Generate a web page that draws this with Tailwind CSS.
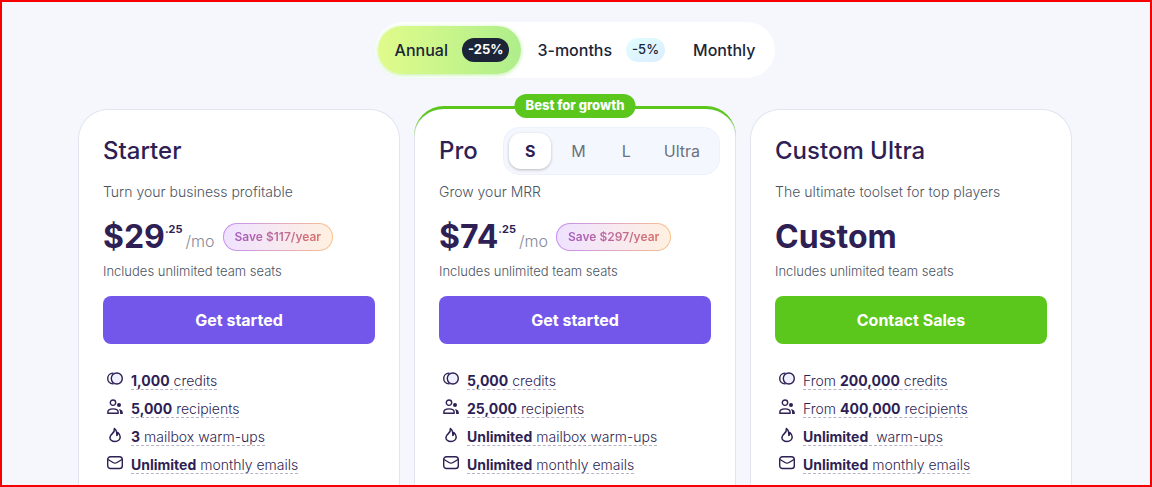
<!DOCTYPE html>
<html lang="en">
<head>
<meta charset="utf-8">
<meta name="viewport" content="width=device-width, initial-scale=1">
<title>Pricing</title>
<script src="https://cdn.jsdelivr.net/npm/@tailwindcss/browser@4"></script>
</head>
<body class="flex min-h-screen flex-col border-2 border-[#f80000] bg-[#f6f7fd] pr-0.5 font-['Inter',sans-serif] text-[#2e1f54]">
<svg class="hidden" aria-hidden="true">
  <symbol id="coins" viewBox="0 0 16 16"><g fill="none" stroke="currentColor" stroke-width="1.4"><circle cx="9.800" cy="7.500" r="5.500" fill="#eef1fd"/><path d="M6 2.100C3 2.300.7 4.500.7 7.500s2.300 5.200 5.300 5.400" stroke-linecap="round"/></g></symbol>
  <symbol id="people" viewBox="0 0 16 16"><g fill="none" stroke="currentColor" stroke-width="1.4"><circle cx="6" cy="3.700" r="2.700"/><path d="M.8 14.200v-.8c0-2.200 1.900-3.500 5.200-3.500s5.200 1.300 5.200 3.500v.8z" stroke-linejoin="round"/></g><circle cx="12" cy="6" r="2" fill="currentColor"/><path d="M11.800 10c2.500.3 4 1.600 4 3.800v1.100h-2.700v-1.100c0-1.600-.4-2.800-1.300-3.800z" fill="currentColor"/></symbol>
  <symbol id="flame" viewBox="0 0 16 16"><path d="M7.400 1.500c.3 2.600-.6 3.800-2.100 5.100C4 7.800 2.900 8.900 2.900 10.500c0 2.300 2.200 3.900 5.100 3.900s5.200-1.700 5.200-4.400c0-1.900-.9-3.300-2.300-4.500 0 1.500-.3 2.300-1.100 2.900C10 5.500 9.400 3 7.400 1.500z" fill="none" stroke="currentColor" stroke-width="1.500" stroke-linejoin="round"/></symbol>
  <symbol id="mail" viewBox="0 0 16 16"><rect x=".7" y="1.700" width="14.600" height="11.800" rx="2.800" fill="none" stroke="currentColor" stroke-width="1.400"/><path d="M1 4.500l5 3c1.300.8 2.700.8 4 0l5-3" fill="none" stroke="currentColor" stroke-width="1.400"/></symbol>
</svg>

<nav aria-label="Billing period" class="mt-5 flex justify-center">
  <div class="flex items-center rounded-full bg-white p-1 pl-[3px] text-base font-medium text-[#1b2537]">
    <button class="flex h-12 items-center gap-3.5 rounded-full bg-linear-to-r from-[#e0fb8b] to-[#aeee8b] pr-3 pl-[17px] shadow-[0_1px_4px_rgba(174,238,139,0.8)]">Annual <span class="flex h-6 items-center rounded-full bg-[#1b2537] px-1.5 text-[13px] font-bold text-white">-25%</span></button>
    <button class="flex h-12 items-center gap-3.5 rounded-full pr-3 pl-4">3-months <span class="flex h-6 items-center rounded-full bg-linear-to-br from-[#e0ffff] to-[#dcecfe] px-1.5 text-[13px]">-5%</span></button>
    <button class="flex h-12 items-center rounded-full px-4">Monthly</button>
  </div>
</nav>

<main class="mx-auto mt-[31px] grid w-full max-w-[994px] flex-1 grid-cols-3 gap-3.5">
  <section class="rounded-t-[30px] border border-b-0 border-[#e1e5ef] bg-white px-6 pt-[17px] pb-2.5">
    <div class="flex h-12 items-center"><h2 class="text-2xl font-medium">Starter</h2></div>
    <p class="mt-[7px] text-sm leading-5 font-light text-[#4b5563]">Turn your business profitable</p>
    <div class="mt-[15px] flex h-10 items-center">
      <span class="text-[32px] leading-10 font-bold">$29</span><sup class="top-0 mb-4 text-[11px] leading-4 font-bold">.25</sup>
      <span class="mt-2 ml-[3px] text-base font-light text-[#868b98]">/mo</span>
      <span class="ml-2 rounded-full bg-linear-to-r from-[#c58df0] to-[#fbc08b] p-px text-xs font-semibold"><span class="flex h-[26px] items-center rounded-full bg-linear-to-r from-[#efe2ff] to-[#fff0e0] px-[11px]"><span class="bg-linear-to-r from-[#a55bbd] to-[#d8706a] bg-clip-text text-transparent">Save $117/year</span></span></span>
    </div>
    <p class="mt-1 text-[13px] leading-5 font-light text-[#4b5563]">Includes unlimited team seats</p>
    <button class="mt-[15px] h-12 w-full rounded-lg bg-[#7357ea] text-base font-bold text-white">Get started</button>
    <ul class="mt-[27px] flex flex-col gap-2 pl-1 text-sm font-light">
      <li class="flex h-5 gap-2"><svg class="size-4"><use href="#coins"/></svg><span class="h-[19px] border-b border-dashed border-[#b8b3c4] leading-5"><b class="font-bold">1,000</b> credits</span></li>
      <li class="flex h-5 gap-2"><svg class="size-4"><use href="#people"/></svg><span class="h-[19px] border-b border-dashed border-[#b8b3c4] leading-5"><b class="font-bold">5,000</b> recipients</span></li>
      <li class="flex h-5 gap-2"><svg class="size-4"><use href="#flame"/></svg><span class="h-[19px] border-b border-dashed border-[#b8b3c4] leading-5"><b class="font-bold">3</b> mailbox warm-ups</span></li>
      <li class="flex h-5 gap-2"><svg class="size-4"><use href="#mail"/></svg><span class="h-[19px] border-b border-dashed border-[#b8b3c4] leading-5"><b class="font-bold">Unlimited</b> monthly emails</span></li>
    </ul>
  </section>

  <section class="relative -mt-[3px] rounded-t-[30px] border-t-3 border-[#5bc61b] bg-white px-[25px] pt-[18px] pb-2.5 shadow-[inset_1px_0_0_#e1e5ef,inset_-1px_0_0_#e1e5ef]">
    <span class="absolute -top-[15px] left-1/2 flex h-6 -translate-x-1/2 items-center rounded-full bg-[#5bc61b] px-[11px] text-[13px] font-extrabold whitespace-nowrap text-white">Best for growth</span>
    <div class="-mr-[9px] flex h-12 items-center justify-between">
      <h2 class="text-2xl font-medium">Pro</h2>
      <div role="group" aria-label="Plan size" class="flex h-12 items-center rounded-2xl border border-[#ecf2fd] bg-[#f4f8fe] px-[5px] text-base text-[#6b7280]">
        <button class="h-9 w-[42px] rounded-xl bg-white font-bold text-[#2e1f54] shadow-[0_1px_3px_rgba(0,0,0,0.25)]">S</button>
        <button class="h-9 px-5">M</button>
        <button class="h-9 px-4">L</button>
        <button class="h-9 pr-3.5 pl-[17px]">Ultra</button>
      </div>
    </div>
    <p class="mt-[7px] text-sm leading-5 font-light text-[#4b5563]">Grow your MRR</p>
    <div class="mt-[15px] flex h-10 items-center">
      <span class="text-[32px] leading-10 font-bold">$74</span><sup class="top-0 mb-4 text-[11px] leading-4 font-bold">.25</sup>
      <span class="mt-2 ml-[3px] text-base font-light text-[#868b98]">/mo</span>
      <span class="ml-2 rounded-full bg-linear-to-r from-[#c58df0] to-[#fbc08b] p-px text-xs font-semibold"><span class="flex h-[26px] items-center rounded-full bg-linear-to-r from-[#efe2ff] to-[#fff0e0] px-[11px]"><span class="bg-linear-to-r from-[#a55bbd] to-[#d8706a] bg-clip-text text-transparent">Save $297/year</span></span></span>
    </div>
    <p class="mt-1 text-[13px] leading-5 font-light text-[#4b5563]">Includes unlimited team seats</p>
    <button class="mt-[15px] h-12 w-full rounded-lg bg-[#7357ea] text-base font-bold text-white">Get started</button>
    <ul class="mt-[27px] flex flex-col gap-2 pl-1 text-sm font-light">
      <li class="flex h-5 gap-2"><svg class="size-4"><use href="#coins"/></svg><span class="h-[19px] border-b border-dashed border-[#b8b3c4] leading-5"><b class="font-bold">5,000</b> credits</span></li>
      <li class="flex h-5 gap-2"><svg class="size-4"><use href="#people"/></svg><span class="h-[19px] border-b border-dashed border-[#b8b3c4] leading-5"><b class="font-bold">25,000</b> recipients</span></li>
      <li class="flex h-5 gap-2"><svg class="size-4"><use href="#flame"/></svg><span class="h-[19px] border-b border-dashed border-[#b8b3c4] leading-5"><b class="font-bold">Unlimited</b> mailbox warm-ups</span></li>
      <li class="flex h-5 gap-2"><svg class="size-4"><use href="#mail"/></svg><span class="h-[19px] border-b border-dashed border-[#b8b3c4] leading-5"><b class="font-bold">Unlimited</b> monthly emails</span></li>
    </ul>
  </section>

  <section class="rounded-t-[30px] border border-b-0 border-[#e1e5ef] bg-white px-6 pt-[17px] pb-2.5">
    <div class="flex h-12 items-center"><h2 class="text-2xl font-medium">Custom Ultra</h2></div>
    <p class="mt-[7px] text-sm leading-5 font-light text-[#4b5563]">The ultimate toolset for top players</p>
    <div class="mt-[15px] flex h-10 items-center"><span class="text-[32px] leading-10 font-bold">Custom</span></div>
    <p class="mt-1 text-[13px] leading-5 font-light text-[#4b5563]">Includes unlimited team seats</p>
    <button class="mt-[15px] h-12 w-full rounded-lg bg-[#5bc61b] text-base font-bold text-white">Contact Sales</button>
    <ul class="mt-[27px] flex flex-col gap-2 pl-1 text-sm font-light">
      <li class="flex h-5 gap-2"><svg class="size-4"><use href="#coins"/></svg><span class="h-[19px] border-b border-dashed border-[#b8b3c4] leading-5">From <b class="font-bold">200,000</b> credits</span></li>
      <li class="flex h-5 gap-2"><svg class="size-4"><use href="#people"/></svg><span class="h-[19px] border-b border-dashed border-[#b8b3c4] leading-5">From <b class="font-bold">400,000</b> recipients</span></li>
      <li class="flex h-5 gap-2"><svg class="size-4"><use href="#flame"/></svg><span class="h-[19px] border-b border-dashed border-[#b8b3c4] leading-5"><b class="font-bold">Unlimited</b>&nbsp; warm-ups</span></li>
      <li class="flex h-5 gap-2"><svg class="size-4"><use href="#mail"/></svg><span class="h-[19px] border-b border-dashed border-[#b8b3c4] leading-5"><b class="font-bold">Unlimited</b> monthly emails</span></li>
    </ul>
  </section>
</main>
</body>
</html>
